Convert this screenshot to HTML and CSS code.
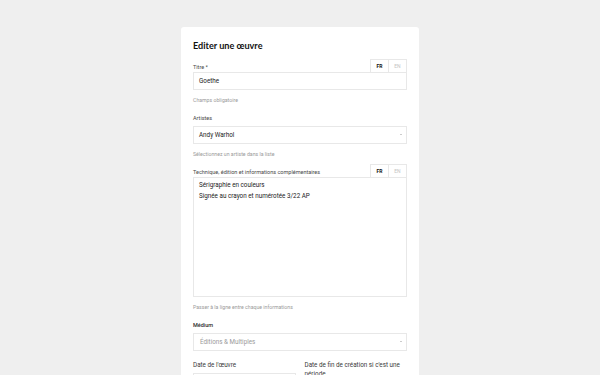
FILE: index.html
```html
<!DOCTYPE html>
<html lang="fr">
<head>
<meta charset="utf-8">
<title>Editer une œuvre</title>
<link rel="stylesheet" href="styles.css">
</head>
<body>
<div class="card">
  <h1 class="title">Editer une œuvre</h1>

  <div class="field field-tabs">
    <div class="head head-tabs">
      <label class="label">Titre *</label>
      <div class="tabs"><span class="tab active">FR</span><span class="tab">EN</span></div>
    </div>
    <div class="input">Goethe</div>
    <div class="help">Champs obligatoire</div>
  </div>

  <div class="field">
    <div class="head">
      <label class="label">Artistes</label>
    </div>
    <div class="input select">Andy Warhol<span class="caret"></span></div>
    <div class="help">Sélectionnez un artiste dans la liste</div>
  </div>

  <div class="field field-tabs">
    <div class="head head-tabs">
      <label class="label">Technique, édition et informations complémentaires</label>
      <div class="tabs"><span class="tab active">FR</span><span class="tab">EN</span></div>
    </div>
    <div class="textarea">Sérigraphie en couleurs<br>Signée au crayon et numérotée 3/22 AP</div>
    <div class="help">Passer à la ligne entre chaque informations</div>
  </div>

  <div class="field">
    <div class="head">
      <label class="label label-strong">Médium</label>
    </div>
    <div class="input select muted">Éditions &amp; Multiples<span class="caret"></span></div>
  </div>

  <div class="row">
    <div class="col">
      <label class="date-label">Date de l'œuvre</label>
      <div class="input short"></div>
    </div>
    <div class="col">
      <label class="date-label">Date de fin de création si c'est une période</label>
    </div>
  </div>
</div>
</body>
</html>
```
FILE: styles.css
```css
html, body {
  margin: 0;
  padding: 0;
  background: #efefef;
  font-family: Roboto, "Liberation Sans", sans-serif;
  color: #222;
}
.card {
  width: 214px;
  margin: 27px auto 0;
  padding: 12px 12px 20px;
  background: #fff;
  border-radius: 3px;
}
.title {
  margin: 0;
  font-family: Lato, Roboto, sans-serif;
  font-size: 9.1px;
  line-height: 13px;
  font-weight: 700;
  color: #111;
}
.field {
  margin-top: 10px;
}
.field-tabs {
  margin-top: 6px;
}
.title + .field {
  margin-top: 7px;
}
.head {
  display: flex;
  justify-content: space-between;
  align-items: flex-end;
  height: 12px;
}
.head-tabs {
  height: 13px;
}
.head .label {
  display: block;
  font-size: 5.5px;
  line-height: 8px;
  color: #484848;
}
.head-tabs .label {
  margin-bottom: 1px;
}
.head:not(.head-tabs) .label {
  align-self: flex-start;
}
.head .label-strong {
  font-weight: 500;
  color: #2a2a2a;
}
.tabs {
  display: flex;
  height: 13px;
  border: 1px solid #e8e8e8;
  border-bottom: none;
  box-sizing: border-box;
}
.tab {
  width: 17px;
  display: flex;
  align-items: center;
  justify-content: center;
  font-size: 5px;
  color: #c4c4c4;
}
.tab.active {
  color: #111;
  font-weight: 700;
  border-right: 1px solid #e8e8e8;
}
.input {
  box-sizing: border-box;
  height: 18px;
  border: 1px solid #e8e8e8;
  padding: 0 5px;
  font-size: 6.3px;
  line-height: 16px;
  color: #222;
  position: relative;
}
.select .caret {
  position: absolute;
  right: 4px;
  top: 7px;
  width: 0;
  height: 0;
  border-left: 1.5px solid transparent;
  border-right: 1.5px solid transparent;
  border-top: 1.5px solid #999;
}
.muted {
  color: #9a9a9a;
  padding-left: 6px;
}
.textarea {
  box-sizing: border-box;
  height: 120px;
  border: 1px solid #e8e8e8;
  padding: 2px 5px;
  font-size: 6.3px;
  line-height: 11px;
  color: #222;
}
.help {
  margin-top: 6px;
  font-size: 5.2px;
  line-height: 8px;
  color: #9a9a9a;
}
.row {
  display: flex;
  gap: 9px;
  margin-top: 10px;
}
.col {
  flex: 1;
}
.date-label {
  display: block;
  font-size: 6.3px;
  line-height: 9px;
  color: #3a3a3a;
  margin-top: -0.5px;
  margin-bottom: 3px;
}
.short {
  height: 18px;
}
```
